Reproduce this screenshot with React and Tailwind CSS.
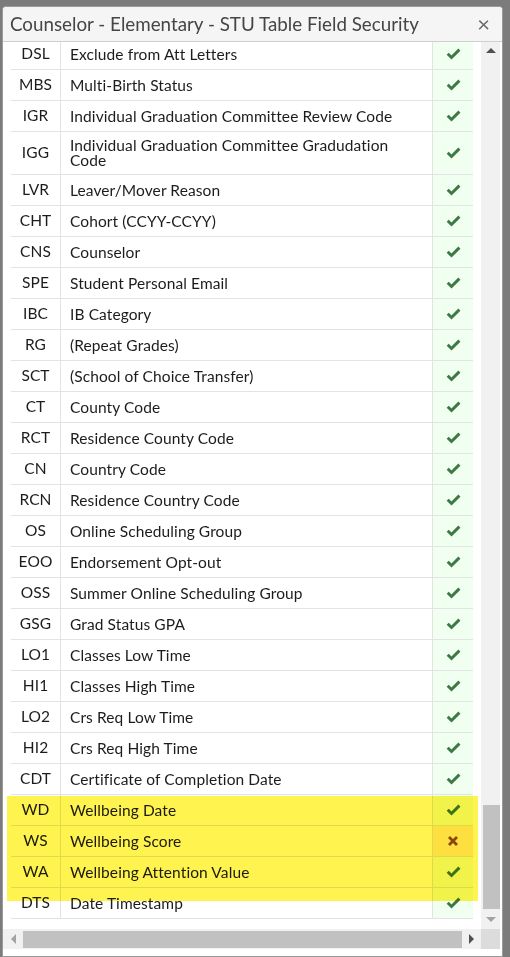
const rows = [
  ["DSL", "Exclude from Att Letters"],
  ["MBS", "Multi-Birth Status"],
  ["IGR", "Individual Graduation Committee Review Code"],
  ["IGG", "Individual Graduation Committee Gradudation Code"],
  ["LVR", "Leaver/Mover Reason"],
  ["CHT", "Cohort (CCYY-CCYY)"],
  ["CNS", "Counselor"],
  ["SPE", "Student Personal Email"],
  ["IBC", "IB Category"],
  ["RG", "(Repeat Grades)"],
  ["SCT", "(School of Choice Transfer)"],
  ["CT", "County Code"],
  ["RCT", "Residence County Code"],
  ["CN", "Country Code"],
  ["RCN", "Residence Country Code"],
  ["OS", "Online Scheduling Group"],
  ["EOO", "Endorsement Opt-out"],
  ["OSS", "Summer Online Scheduling Group"],
  ["GSG", "Grad Status GPA"],
  ["LO1", "Classes Low Time"],
  ["HI1", "Classes High Time"],
  ["LO2", "Crs Req Low Time"],
  ["HI2", "Crs Req High Time"],
  ["CDT", "Certificate of Completion Date"],
  ["WD", "Wellbeing Date"],
  ["WS", "Wellbeing Score", false],
  ["WA", "Wellbeing Attention Value"],
  ["DTS", "Date Timestamp"]
];

const CheckMark = () => (
  <svg width="15" height="12" viewBox="0 0 15 12" className="text-[#3d7944]">
    <path d="M1.7 5.8 L5.5 9.5 L13.4 1.6" fill="none" stroke="currentColor" strokeWidth="3" />
  </svg>
);

const CrossMark = () => (
  <svg width="12" height="12" viewBox="0 0 12 12" className="text-[#8a4a1c]">
    <path d="M2 2 L10 10 M10 2 L2 10" fill="none" stroke="currentColor" strokeWidth="2.8" />
  </svg>
);

const Row = ({ code, label, allowed = true }) => (
  <div className="flex border-b border-[#e3e3e3]">
    <div className="w-[50px] shrink-0 flex items-center justify-center border-r border-[#e3e3e3]">{code}</div>
    <div className="flex-1 min-h-[30px] flex items-center pl-[9px] pr-[16px] py-[6px] leading-[15px]">{label}</div>
    <div
      className={`w-[41px] shrink-0 flex items-center justify-center border-l border-[#e3e3e3] ${
        allowed ? "bg-[#f1fff0]" : "bg-[#feeacc]"
      }`}
    >
      {allowed ? <CheckMark /> : <CrossMark />}
    </div>
  </div>
);

const Arrow = ({ dir, tone }) => {
  const shapes = {
    up: "border-x-[5px] border-x-transparent border-b-[5px]",
    down: "border-x-[5px] border-x-transparent border-t-[5px]",
    left: "border-y-[5px] border-y-transparent border-r-[5px]",
    right: "border-y-[5px] border-y-transparent border-l-[5px]"
  };
  return <div className={`h-0 w-0 ${shapes[dir]} ${tone}`} />;
};

export default function App() {
  return (
    <div className="h-[957px] overflow-hidden bg-[#7c7c7c] pt-[6px] pl-[2px] pr-[7px] font-['Lato',sans-serif] text-[#1c1c1c]">
      <div className="h-[951px] bg-white rounded-t-[4px] border border-[#9a9a9a] flex flex-col overflow-hidden">
        <header className="h-[35px] shrink-0 bg-[#f5f5f5] border-b border-[#cfcfcf] flex items-center justify-between pl-[7px] pr-[12px]">
          <h1 className="text-[18.8px] text-[#454545]">Counselor - Elementary - STU Table Field Security</h1>
          <span className="text-[22px] leading-none text-[#6a6a6a]">×</span>
        </header>

        <div className="flex flex-col pr-[2px]">
          <div className="flex h-[887px]">
            <div className="relative flex-1 overflow-hidden px-[8px]">
              <div className="-mt-[4px] text-[15.5px] tracking-[0.1px] border-t border-[#e3e3e3]">
                {rows.map(([code, label, allowed]) => (
                  <Row key={code} code={code} label={label} allowed={allowed !== false} />
                ))}
              </div>
              <div className="absolute left-[4px] right-[3px] top-[754px] h-[105px] bg-[#fff350] mix-blend-multiply" />
            </div>

            <div className="w-[19px] shrink-0 bg-[#f1f1f1] flex flex-col items-center">
              <div className="h-[17px] flex items-center justify-center">
                <Arrow dir="up" tone="border-b-[#505050]" />
              </div>
              <div className="flex-1" />
              <div className="h-[104px] w-[17px] ml-[2px] bg-[#c1c1c1]" />
              <div className="h-[20px] flex items-center justify-center">
                <Arrow dir="down" tone="border-t-[#a3a3a3]" />
              </div>
            </div>
          </div>

          <div className="flex h-[20px]">
            <div className="flex-1 bg-[#f1f1f1] flex items-center pl-[8px] pr-[7px]">
              <Arrow dir="left" tone="border-r-[#a3a3a3]" />
              <div className="mx-[7px] h-[17px] flex-1 bg-[#c1c1c1]" />
              <Arrow dir="right" tone="border-l-[#505050]" />
            </div>
            <div className="w-[19px] bg-[#dcdcdc]" />
          </div>
        </div>
      </div>
    </div>
  );
}
